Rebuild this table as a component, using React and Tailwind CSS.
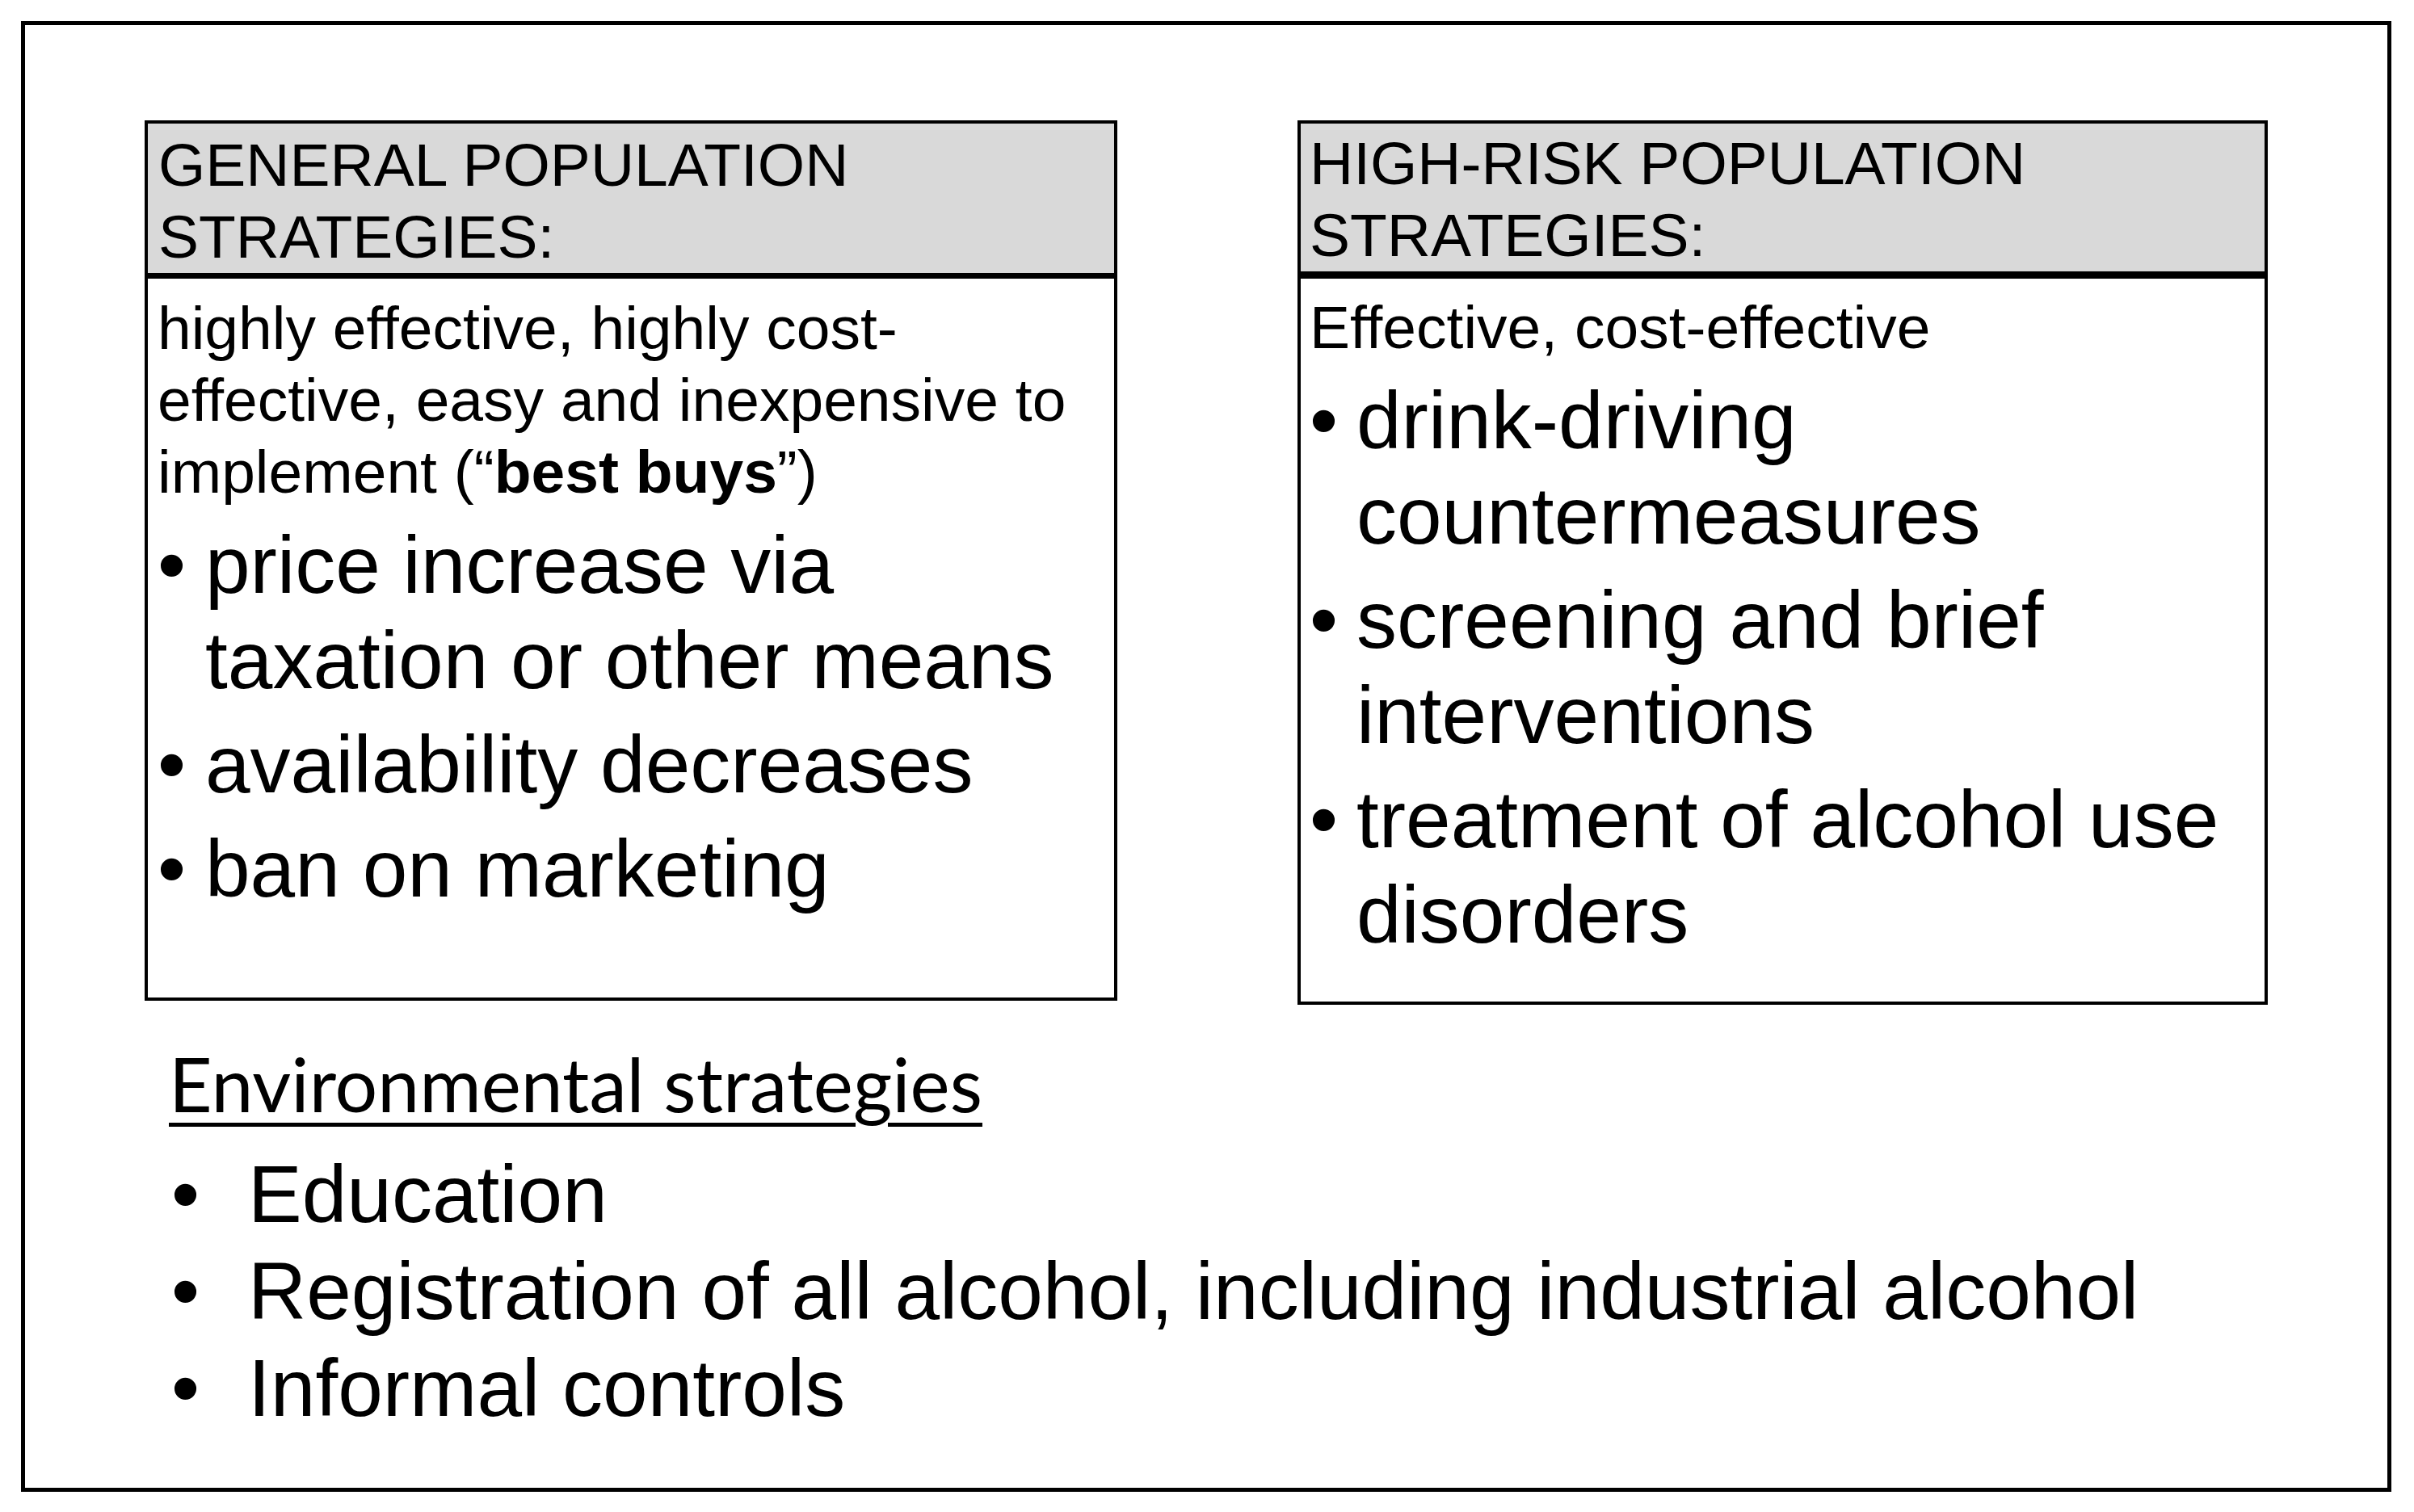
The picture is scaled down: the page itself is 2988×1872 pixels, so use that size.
import React from "react";

const arial = { fontFamily: '"Liberation Sans", Arial, sans-serif' };

const Bullet = ({ children, indent }) => (
  <li className="flex mt-[11px]">
    <span className={`${indent} shrink-0`}>•</span>
    <span>{children}</span>
  </li>
);

const StrategyBox = ({ title, lead, items, className, headerClass, bodyClass, indent }) => (
  <div className={`border-4 border-black bg-white ${className}`}>
    <div className={`bg-[#d9d9d9] border-black text-[75px] leading-[89px] ${headerClass}`}>
      {title.map((line) => (
        <div key={line}>{line}</div>
      ))}
    </div>
    <div className={bodyClass}>
      <p className="text-[75px] leading-[89px]">{lead}</p>
      <ul className="text-[100px] leading-[118px]">
        {items.map((item) => (
          <Bullet key={item} indent={indent}>
            {item}
          </Bullet>
        ))}
      </ul>
    </div>
  </div>
);

export default function App() {
  return (
    <div className="w-[2988px] h-[1872px] bg-white pt-[26px] pl-[26px] text-black" style={arial}>
      <div className="w-[2934px] h-[1821px] border-[5px] border-black pl-[148px] pt-[118px]">
        <div className="flex items-start gap-[223px]">
          <StrategyBox
            className="w-[1204px] h-[1090px]"
            headerClass="pt-[7px] pl-[13px] border-b-[7px]"
            bodyClass="pt-[17px] pl-[12px] pr-[10px]"
            indent="w-[59px]"
            title={["GENERAL POPULATION", "STRATEGIES:"]}
            lead={
              <>
                highly effective, highly cost-effective, easy and inexpensive to implement (“<b>best buys</b>”)
              </>
            }
            items={["price increase via taxation or other means", "availability decreases", "ban on marketing"]}
          />
          <StrategyBox
            className="w-[1201px] h-[1095px]"
            headerClass="pt-[5px] pl-[11px] border-b-[9px]"
            bodyClass="pt-[16px] pl-[11px] pr-[10px]"
            indent="w-[58px]"
            title={["HIGH-RISK POPULATION", "STRATEGIES:"]}
            lead="Effective, cost-effective"
            items={["drink-driving countermeasures", "screening and brief interventions", "treatment of alcohol use disorders"]}
          />
        </div>

        <div
          className="ml-[30px] mt-[42px] text-[93px] leading-[1.2] underline decoration-[5px] underline-offset-[13px]"
          style={{ fontFamily: 'Lato, "Open Sans", sans-serif' }}
        >
          Environmental strategies
        </div>

        <ul className="ml-[33px] mt-[20px] text-[100px] leading-[120px]">
          {["Education", "Registration of all alcohol, including industrial alcohol", "Informal controls"].map((t) => (
            <li key={t} className="flex">
              <span className="w-[95px] shrink-0">•</span>
              <span>{t}</span>
            </li>
          ))}
        </ul>
      </div>
    </div>
  );
}
